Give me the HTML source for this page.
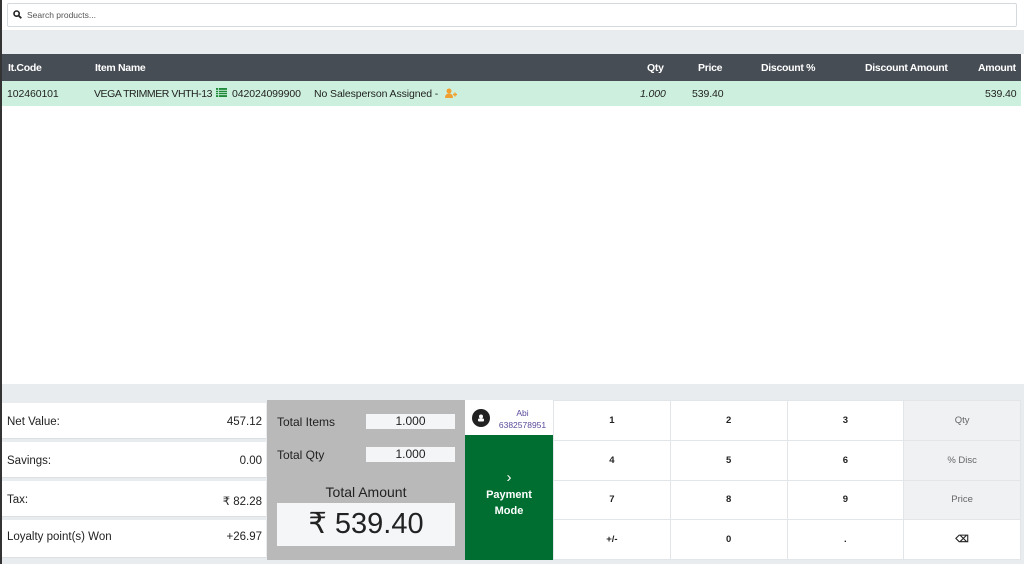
<!DOCTYPE html>
<html><head><style>
*{box-sizing:border-box;margin:0;padding:0}
body{width:1024px;height:564px;overflow:hidden;background:#fff;font-family:"Liberation Sans",sans-serif;position:relative;color:#222;font-size:11px}
.a{position:absolute}
.h{color:#fff;font-weight:bold;font-size:10.5px;top:62px;letter-spacing:-0.3px}
.r{top:88px;font-size:10.5px;color:#222;letter-spacing:-0.1px}
.lc{left:2px;width:264px;height:36px;background:#fff;border-bottom:1px solid #dde0e3;font-size:11.5px}
.lc span{position:absolute;top:13px}
.k{background:#fff;border:1px solid #e3e6e9;text-align:center;font-size:9.5px;color:#222;font-weight:bold}
.k2{background:#f0f1f3;color:#666;font-weight:normal}
</style></head><body>
<div class="a" style="left:0;top:0;width:2px;height:564px;background:#333"></div>
<div class="a" style="left:2px;top:30px;width:1022px;height:24px;background:#e9ecef"></div>
<div class="a" style="left:7px;top:3px;width:1010px;height:24px;border:1px solid #d6d9dc;border-radius:2px;background:#fff"></div>
<svg class="a" style="left:13px;top:10px" width="9" height="9" viewBox="0 0 9 9"><circle cx="3.6" cy="3.6" r="2.6" fill="none" stroke="#222" stroke-width="1.6"/><path d="M5.5 5.5L8.3 8.3" stroke="#222" stroke-width="1.8"/></svg>
<div class="a" style="left:27px;top:10px;font-size:8.5px;color:#555">Search products...</div>
<div class="a" style="left:2px;top:54px;width:1019px;height:27px;background:#474d55"></div>
<div class="a h" style="left:8px">It.Code</div>
<div class="a h" style="left:95px">Item Name</div>
<div class="a h" style="left:647px">Qty</div>
<div class="a h" style="left:698px">Price</div>
<div class="a h" style="left:761px">Discount %</div>
<div class="a h" style="left:865px">Discount Amount</div>
<div class="a h" style="left:978px">Amount</div>
<div class="a" style="left:2px;top:81px;width:1019px;height:25px;background:#cdf0de"></div>
<div class="a r" style="left:7px">102460101</div>
<div class="a r" style="left:94px;letter-spacing:-0.45px">VEGA TRIMMER VHTH-13</div>
<svg class="a" style="left:216px;top:88px" width="11" height="9"><rect x="0" y="0" width="11" height="9" fill="#1f8a3a"/><path d="M0 2.3H11M0 4.5H11M0 6.7H11M2.5 0V9" stroke="#cdf0de" stroke-width="0.8"/></svg>
<div class="a r" style="left:232px">042024099900</div>
<div class="a r" style="left:314px">No Salesperson Assigned -</div>
<svg class="a" style="left:444px;top:88px" width="13" height="10"><circle cx="5" cy="3" r="2.5" fill="#f0a030"/><path d="M1 10Q1 5.5 5 5.5Q9 5.5 9 10Z" fill="#f0a030"/><path d="M9 6.5H13M11 4.5V8.5" stroke="#f0a030" stroke-width="1.4"/></svg>
<div class="a r" style="left:640px;font-style:italic">1.000</div>
<div class="a r" style="left:692px">539.40</div>
<div class="a r" style="left:985px">539.40</div>
<div class="a" style="left:2px;top:384px;width:1022px;height:180px;background:#e9ecef"></div>
<div class="a lc" style="top:403px"><span style="left:5px">Net Value:</span><span style="right:4px">457.12</span></div>
<div class="a lc" style="top:442px"><span style="left:5px">Savings:</span><span style="right:4px">0.00</span></div>
<div class="a lc" style="top:481px"><span style="left:5px">Tax:</span><span style="right:4px">₹ 82.28</span></div>
<div class="a lc" style="top:520px;height:38px"><span style="left:5px;top:11px">Loyalty point(s) Won</span><span style="right:4px;top:11px">+26.97</span></div>
<div class="a" style="left:267px;top:400px;width:198px;height:160px;background:#b9b9b9"></div>
<div class="a" style="left:277px;top:415px;font-size:12px">Total Items</div>
<div class="a" style="left:366px;top:414px;width:89px;height:15px;background:#f3f5f7;text-align:center;font-size:12px;line-height:15px">1.000</div>
<div class="a" style="left:277px;top:448px;font-size:12px">Total Qty</div>
<div class="a" style="left:366px;top:447px;width:89px;height:15px;background:#f3f5f7;text-align:center;font-size:12px;line-height:15px">1.000</div>
<div class="a" style="left:267px;top:484px;width:198px;text-align:center;font-size:14px;color:#222">Total Amount</div>
<div class="a" style="left:277px;top:503px;width:178px;height:43px;background:#f4f6f8;text-align:center;font-size:29px;line-height:43px;color:#222">₹ 539.40</div>
<div class="a" style="left:465px;top:400px;width:88px;height:35px;background:#fff"></div>
<svg class="a" style="left:472px;top:409px" width="18" height="18"><circle cx="9" cy="9" r="9" fill="#222"/><circle cx="9" cy="7.5" r="2" fill="#fff"/><rect x="6" y="9.5" width="6" height="3" rx="1" fill="#fff"/></svg>
<div class="a" style="left:495px;top:407px;width:55px;text-align:center;font-size:8.5px;color:#5a4a9a;line-height:12px">Abi<br>6382578951</div>
<div class="a" style="left:465px;top:435px;width:88px;height:125px;background:#006e30;color:#fff;text-align:center;font-size:11px;font-weight:bold;line-height:16px;padding-top:35px"><span style="font-size:15px;font-weight:normal">›</span><br>Payment<br>Mode</div>
<div class="a" style="left:553px;top:400px;width:468px;height:160px">
<table style="border-collapse:collapse;width:468px;height:160px;table-layout:fixed">
<tr><td class="k">1</td><td class="k">2</td><td class="k">3</td><td class="k k2">Qty</td></tr>
<tr><td class="k">4</td><td class="k">5</td><td class="k">6</td><td class="k k2">% Disc</td></tr>
<tr><td class="k">7</td><td class="k">8</td><td class="k">9</td><td class="k k2">Price</td></tr>
<tr><td class="k">+/-</td><td class="k">0</td><td class="k">.</td><td class="k">⌫</td></tr>
</table></div>
</body></html>
